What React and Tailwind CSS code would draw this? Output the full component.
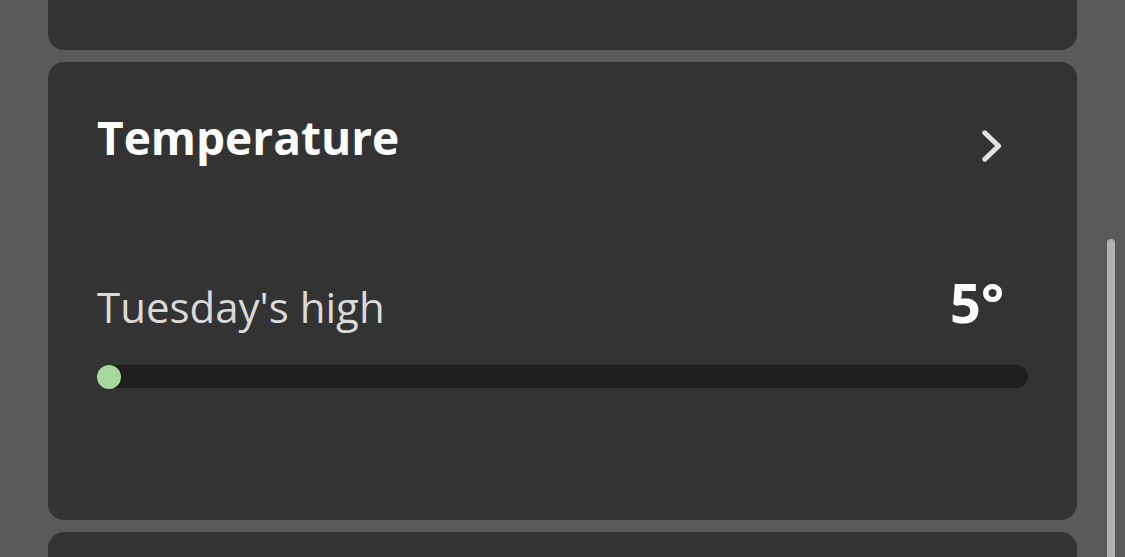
import React from "react";

const Chevron = () => (
  <svg width="20" height="32" viewBox="0 0 20 32" fill="none">
    <path
      d="M2.8 2.8 L16.6 16 L2.8 29.2"
      stroke="#e2e2e2"
      strokeWidth="5"
      strokeLinecap="round"
      strokeLinejoin="round"
    />
  </svg>
);

const TemperatureCard = ({ day, value, percent }) => {
  return (
    <div className="h-[458px] shrink-0 rounded-[16px] bg-[#333333] px-[49px] pt-[47px]">
      <div className="flex flex-row items-start justify-between">
        <h2 className="text-[46px] leading-[56px] font-bold text-white">
          Temperature
        </h2>
        <div className="mt-[21px] mr-[26px]">
          <Chevron />
        </div>
      </div>
      <div className="mt-[111px] flex flex-row items-baseline justify-between pr-[24px]">
        <span className="text-[42px] leading-[52px] text-[#dadada]">
          {day}'s high
        </span>
        <span className="text-[54px] leading-[52px] font-bold text-white">
          {value}°
        </span>
      </div>
      <div className="mt-[32px] h-[23px] rounded-full bg-[#1f1f1f] flex flex-row items-center">
        <div
          className="h-[24px] w-[24px] rounded-full bg-[#a9d89f]"
          style={{ marginLeft: `${percent}%` }}
        />
      </div>
    </div>
  );
};

export default function App() {
  return (
    <div
      className="h-[557px] w-[1125px] overflow-hidden bg-[#5a5a5a] flex flex-row"
      style={{ fontFamily: '"Open Sans", "Noto Sans", sans-serif' }}
    >
      <div className="ml-[48px] w-[1029px] shrink-0 flex flex-col gap-[12px]">
        <div className="h-[50px] shrink-0 rounded-b-[16px] bg-[#333333]" />
        <TemperatureCard day="Tuesday" value={5} percent={0} />
        <div className="h-[60px] shrink-0 rounded-t-[16px] bg-[#333333]" />
      </div>
      <div className="flex-1 flex flex-row justify-end pr-[10px]">
        <div className="mt-[239px] h-[340px] w-[8px] shrink-0 rounded-full bg-[#b0b0b0]" />
      </div>
    </div>
  );
}
